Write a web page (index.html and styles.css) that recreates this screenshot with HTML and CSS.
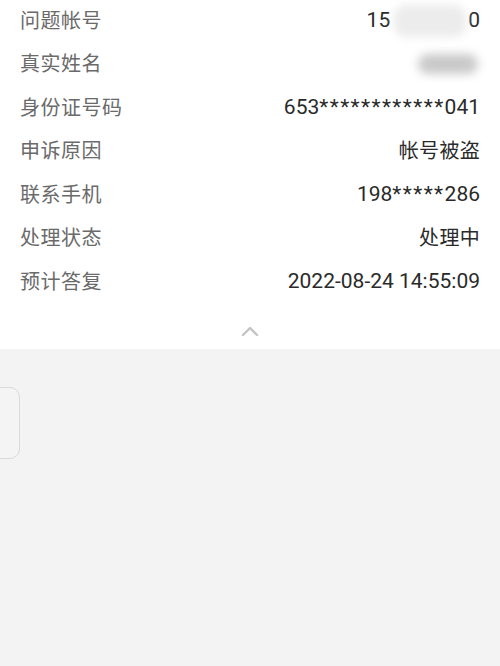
FILE: index.html
```html
<!DOCTYPE html>
<html lang="zh">
<head>
<meta charset="utf-8">
<link rel="stylesheet" href="styles.css">
</head>
<body>
<div class="sheet">
  <ul class="info">
    <li class="row"><span class="label">问题帐号</span><span class="value num">15<span class="mask mask-light"></span>0</span></li>
    <li class="row"><span class="label">真实姓名</span><span class="value"><span class="mask mask-dark"></span></span></li>
    <li class="row"><span class="label">身份证号码</span><span class="value num">653<span class="stars">************</span>041</span></li>
    <li class="row"><span class="label">申诉原因</span><span class="value">帐号被盗</span></li>
    <li class="row"><span class="label">联系手机</span><span class="value num">198<span class="stars">*****</span>286</span></li>
    <li class="row"><span class="label">处理状态</span><span class="value">处理中</span></li>
    <li class="row"><span class="label">预计答复</span><span class="value num">2022-08-24 14:55:09</span></li>
  </ul>
  <div class="collapse">
    <svg width="18" height="12" viewBox="0 0 18 12"><path d="M2 10 L9 3 L16 10" fill="none" stroke="#c4c4c4" stroke-width="2.4" stroke-linecap="round" stroke-linejoin="round"/></svg>
  </div>
</div>
<div class="below">
  <div class="side-card"></div>
</div>
</body>
</html>
```
FILE: styles.css
```css
html, body {
  margin: 0;
  padding: 0;
  background: #f3f3f3;
  font-family: "Roboto", "Noto Sans CJK SC", sans-serif;
  overflow: hidden;
}
.sheet {
  background: #fff;
  height: 349px;
  overflow: hidden;
}
.info {
  list-style: none;
  margin: -1px 0 0;
  padding: 0 20px;
}
.row {
  display: flex;
  justify-content: space-between;
  align-items: center;
  height: 43.5px;
  font-size: 20px;
  line-height: 1;
}
.label {
  color: #6a6a6a;
  letter-spacing: 0.5px;
}
.value {
  color: #2a2a2a;
  display: flex;
  align-items: center;
  letter-spacing: 0.3px;
}
.num {
  font-size: 21px;
  letter-spacing: 0;
}
.stars {
  letter-spacing: 1.4px;
}
.mask {
  display: inline-block;
  border-radius: 12px;
}
.mask-light {
  width: 72px;
  height: 32px;
  background: #ececec;
  filter: blur(4px);
  margin: 0 2px 0 4px;
}
.mask-dark {
  width: 60px;
  height: 20px;
  background: #c9c9c9;
  filter: blur(5px);
  margin-right: 2px;
}
.collapse {
  display: flex;
  justify-content: center;
  padding-top: 21px;
}
.below {
  padding-top: 38px;
}
.side-card {
  width: 38px;
  height: 70px;
  margin-left: -20px;
  border: 1px solid #dadada;
  border-radius: 10px;
  background: #f4f4f4;
}
```
